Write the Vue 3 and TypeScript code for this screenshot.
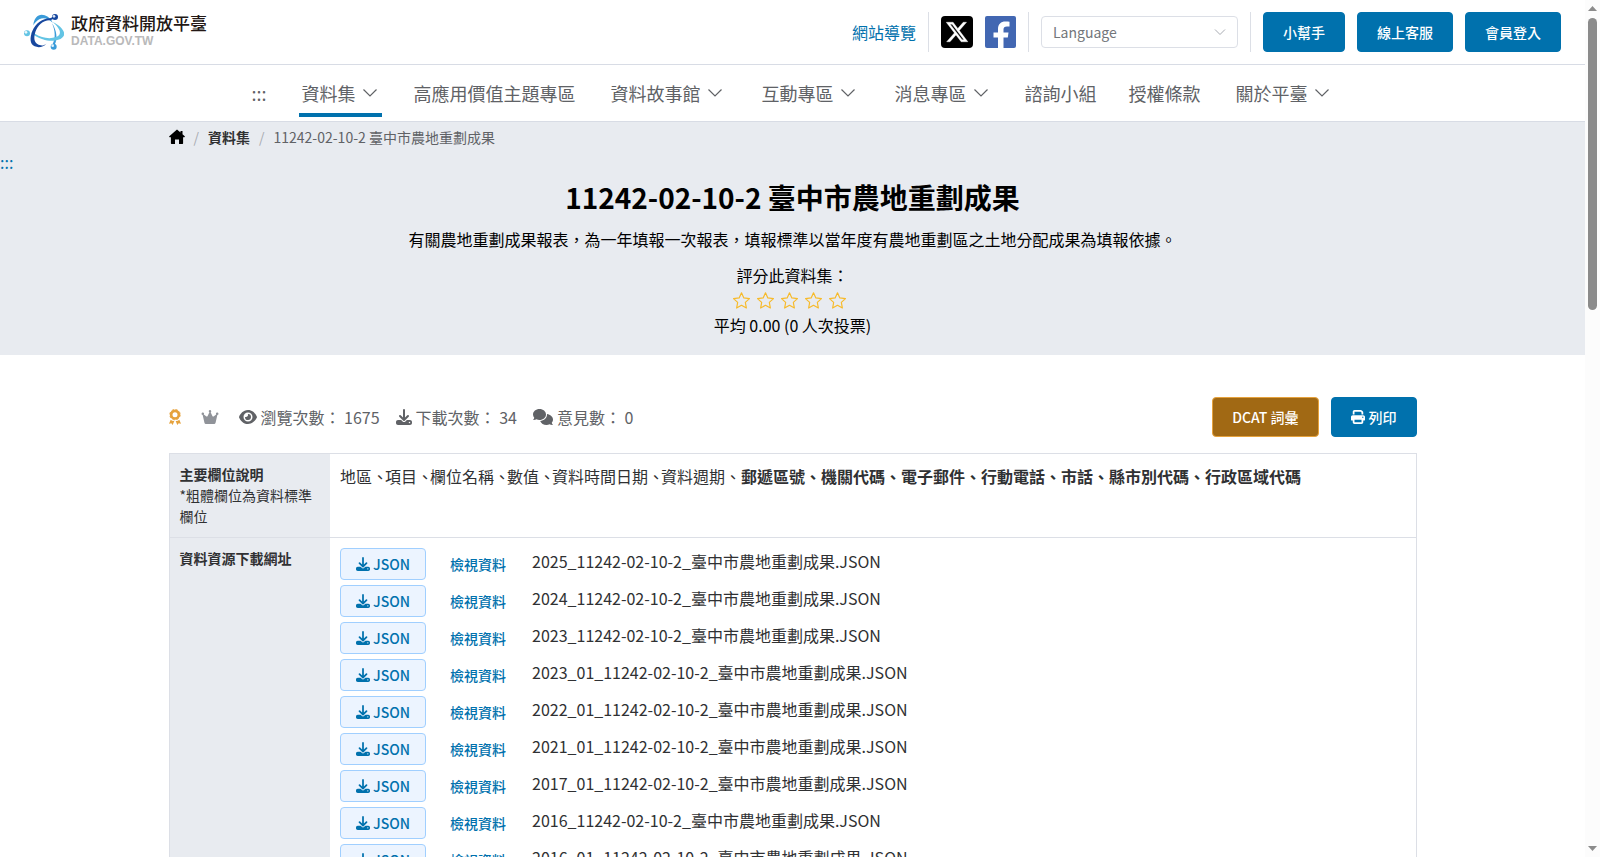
<script setup lang="ts">
import { ref } from 'vue'

interface NavItem {
  label: string
  menu: boolean
  active?: boolean
}

const navItems: NavItem[] = [
  { label: '資料集', menu: true, active: true },
  { label: '高應用價值主題專區', menu: false },
  { label: '資料故事館', menu: true },
  { label: '互動專區', menu: true },
  { label: '消息專區', menu: true },
  { label: '諮詢小組', menu: false },
  { label: '授權條款', menu: false },
  { label: '關於平臺', menu: true },
]

const title = '11242-02-10-2 臺中市農地重劃成果'
const fields = ['地區', '項目', '欄位名稱', '數值', '資料時間日期', '資料週期']
const standardFields = ['郵遞區號', '機關代碼', '電子郵件', '行動電話', '市話', '縣市別代碼', '行政區域代碼']
const editions = ['2025', '2024', '2023', '2023_01', '2022_01', '2021_01', '2017_01', '2016', '2016_01']
const files = editions.map((e) => `${e}_11242-02-10-2_臺中市農地重劃成果.JSON`)

const language = ref('')
const rating = ref(0)
</script>

<template>
  <div class="shell">
    <div class="page">
      <header class="top">
        <a class="brand" href="#">
          <svg class="brand-mark" viewBox="0 0 120 108" aria-hidden="true">
            <path d="M28 34C30 8 46-2 62 4C74 8 82 17 86 26C74 14 58 9 46 16C38 20 32 27 28 34Z" fill="#3a9bd9" />
            <path d="M84 28C98 48 102 76 92 92L86 90C95 74 94 50 84 28Z" fill="#3a9bd9" />
            <path d="M24 54L34 60C52 72 78 76 96 69C114 62 112 47 86 24C110 35 126 54 119 66C111 80 82 85 56 76C42 72 30 64 22 58Z" fill="#63c4e4" />
            <path d="M88 14L80 19C58 17 41 34 34 54C27 76 32 91 50 94C56 95 62 93 67 89C59 99 44 102 32 97C17 90 17 71 25 51C35 28 56 13 78 13L87 9Z" fill="#17479e" />
            <circle cx="93" cy="9" r="9" fill="#17479e" /><circle cx="90" cy="7" r="4" fill="#dfe9f6" />
            <circle cx="9" cy="58" r="9" fill="#63c4e4" /><circle cx="6" cy="55" r="4" fill="#eef9fc" />
            <circle cx="89" cy="98" r="9" fill="#3a9bd9" /><circle cx="86" cy="95" r="4" fill="#e4f2fb" />
          </svg>
          <span class="brand-text">
            <span class="brand-name">政府資料開放平臺</span>
            <span class="brand-domain">DATA.GOV.TW</span>
          </span>
        </a>
        <div class="tools">
          <a class="sitemap" href="#">網站導覽</a>
          <span class="rule"></span>
          <a class="social" href="#" aria-label="X">
            <svg viewBox="0 0 32 32" aria-hidden="true">
              <rect width="32" height="32" rx="4" fill="#000" />
              <path fill="#fff" stroke="#fff" stroke-width=".4" transform="translate(4 4)" d="M18.244 2.25h3.308l-7.227 8.260 8.502 11.240H16.170l-5.214-6.817L4.990 21.750H1.680l7.730-8.835L1.254 2.250H8.080l4.713 6.231zm-1.161 17.520h1.833L7.084 4.126H5.117z" />
            </svg>
          </a>
          <a class="social facebook" href="#" aria-label="Facebook">
            <svg viewBox="0 0 31 32" aria-hidden="true">
              <rect width="31" height="32" rx="2" fill="#4267b2" />
              <path fill="#fff" d="M13 32V21.500H8.500V16.500H13V13c0-5 3-7.500 7.300-7.500 1.700 0 3.200.1 4.200.2v4.700H22c-2.500 0-3.500 1.200-3.500 3v3.100h5l-.7 5h-4.300V32z" />
            </svg>
          </a>
          <span class="rule"></span>
          <span class="select-wrap">
            <select v-model="language" class="language" aria-label="Language">
              <option value="">Language</option>
              <option value="en">English</option>
              <option value="zh">中文</option>
            </select>
            <svg class="select-arrow" viewBox="0 0 14 14" aria-hidden="true"><path d="M2 4.500l5 5 5-5" fill="none" stroke="#a8abb2" /></svg>
          </span>
          <span class="rule"></span>
          <button class="btn" type="button">小幫手</button>
          <button class="btn" type="button">線上客服</button>
          <button class="btn" type="button">會員登入</button>
        </div>
      </header>

      <nav class="nav" aria-label="主選單">
        <a class="access" href="#">:::</a>
        <a v-for="item in navItems" :key="item.label" href="#" class="nav-item" :class="{ menu: item.menu, active: item.active }">
          {{ item.label }}
          <svg v-if="item.menu" viewBox="0 0 18 18" aria-hidden="true"><path d="M2.500 5.500L9 12l6.500-6.500" fill="none" stroke="currentColor" stroke-width="1.200" /></svg>
        </a>
      </nav>

      <section class="hero">
        <ol class="crumbs">
          <li>
            <a href="#" aria-label="首頁">
              <svg class="home" viewBox="0 0 16 16" aria-hidden="true"><path d="M8 .5L11.500 3.500V2h2v3.300L16 7.600l-1 1-.9-.6v6.300c0 .4-.2.700-.6.700H10V10.500H6V15H2.500c-.4 0-.6-.3-.6-.7V8L1 8.600l-1-1z" /></svg>
            </a>
          </li>
          <li><a class="crumb-link" href="#">資料集</a></li>
          <li>{{ title }}</li>
        </ol>
        <a class="anchor" href="#">:::</a>
        <h1>{{ title }}</h1>
        <p class="summary">有關農地重劃成果報表，為一年填報一次報表，填報標準以當年度有農地重劃區之土地分配成果為填報依據。</p>
        <p class="rate-label">評分此資料集：</p>
        <div class="stars">
          <button v-for="n in 5" :key="n" type="button" class="star" :aria-label="`${n} 星`" @click="rating = n">
            <svg viewBox="1 1 16 16" aria-hidden="true"><path d="M9 1.800l2.200 4.800 5.300.6-3.900 3.600 1 5.300L9 13.500l-4.600 2.600 1-5.300L1.500 7.200l5.300-.6z" :fill="n <= rating ? '#f7ba2a' : 'none'" stroke="#f7ba2a" stroke-width="1.100" stroke-linejoin="round" /></svg>
          </button>
        </div>
        <p class="average">平均 0.00 (0 人次投票)</p>
      </section>

      <main class="content">
        <div class="bar">
          <div class="stats">
            <svg class="award" viewBox="0 0 36 48" aria-hidden="true">
              <circle cx="18" cy="17" r="11.500" fill="none" stroke="#e6a23c" stroke-width="8" />
              <circle cx="18" cy="17" r="15.500" fill="none" stroke="#e6a23c" stroke-width="3" stroke-dasharray="7 5.170" />
              <path fill="#e6a23c" d="M5 32c3 2 6 4 11 4l-5 12-4-5-7 1zM31 32c-3 2-6 4-11 4l5 12 4-5 7 1z" />
            </svg>
            <svg class="crown" viewBox="0 0 576 512" aria-hidden="true"><path fill="#909399" d="M309 106c11-7 19-19 19-34a40 40 0 1 0-59 34l-57 115c-9 18-33 24-49 11l-73-58a40 40 0 1 0-38 18h1l55 238c5 30 32 50 62 50h236c30 0 57-20 62-50l55-238h1a40 40 0 1 0-38-18l-73 58c-16 13-40 7-49-11z" /></svg>
            <span class="stat">
              <svg class="eye" viewBox="0 0 576 512" aria-hidden="true"><path fill="currentColor" fill-rule="evenodd" d="M288 32C130 32 40 160 3 244c-3 8-3 16 0 24 37 84 127 212 285 212s248-128 285-212c3-8 3-16 0-24C536 160 446 32 288 32zM144 256a144 144 0 1 1 288 0 144 144 0 1 1-288 0zM288 192a64 64 0 0 1-84 61c-6-2-12 2-12 8a96 96 0 1 0 101-101c-6 0-10 6-8 12 2 6 3 13 3 20z" /></svg>
              瀏覽次數： 1675
            </span>
            <span class="stat">
              <svg class="down" viewBox="0 0 512 512" aria-hidden="true"><path fill="currentColor" fill-rule="evenodd" d="M288 32a32 32 0 0 0-64 0v243l-73-74a32 32 0 0 0-46 46l128 128a32 32 0 0 0 46 0l128-128a32 32 0 0 0-46-46l-73 74zM64 352c-35 0-64 29-64 64v32c0 35 29 64 64 64h384c35 0 64-29 64-64v-32c0-35-29-64-64-64H347l-46 45a64 64 0 0 1-90 0l-46-45zM432 408a24 24 0 1 1 0 48 24 24 0 0 1 0-48z" /></svg>
              下載次數： 34
            </span>
            <span class="stat">
              <svg class="chat" viewBox="0 0 640 512" aria-hidden="true"><path fill="currentColor" d="M208 352c115 0 208-79 208-176S323 0 208 0 0 79 0 176c0 38 15 74 40 103-4 22-16 38-28 51-8 8-4 22 8 22 36 0 66-12 90-25 28 16 62 25 98 25zM448 176c0 112-99 196-219 207 25 75 110 129 203 129 36 0 70-9 98-25 24 13 54 25 90 25 12 0 16-14 8-22-12-13-24-29-28-51 25-29 40-65 40-103 0-87-85-160-192-176z" /></svg>
              意見數： 0
            </span>
          </div>
          <div class="actions">
            <button class="btn dcat" type="button">DCAT 詞彙</button>
            <button class="btn" type="button">
              <svg class="print" viewBox="0 0 512 512" aria-hidden="true"><path fill="currentColor" fill-rule="evenodd" d="M128 0C93 0 64 29 64 64v96h64V64h227l29 29v67h64V93c0-17-7-33-19-45L400 19C388 7 372 0 355 0zM64 192c-35 0-64 29-64 64v112c0 9 7 16 16 16h48v64c0 35 29 64 64 64h256c35 0 64-29 64-64v-64h48c9 0 16-7 16-16V256c0-35-29-64-64-64zM128 352h256v96H128zM432 240a24 24 0 1 1 0 48 24 24 0 0 1 0-48z" /></svg>
              列印
            </button>
          </div>
        </div>

        <table class="info">
          <tbody>
            <tr>
              <th scope="row">主要欄位說明<br /><span class="note">*粗體欄位為資料標準欄位</span></th>
              <td><span v-for="f in fields" :key="f" class="field">{{ f }}、</span><b>{{ standardFields.join('、') }}</b></td>
            </tr>
            <tr>
              <th scope="row">資料資源下載網址</th>
              <td>
                <ul class="files">
                  <li v-for="f in files" :key="f">
                    <button class="json" type="button">
                      <svg class="json-icon" viewBox="0 0 512 512" aria-hidden="true"><path fill="currentColor" fill-rule="evenodd" d="M288 32a32 32 0 0 0-64 0v243l-73-74a32 32 0 0 0-46 46l128 128a32 32 0 0 0 46 0l128-128a32 32 0 0 0-46-46l-73 74zM64 352c-35 0-64 29-64 64v32c0 35 29 64 64 64h384c35 0 64-29 64-64v-32c0-35-29-64-64-64H347l-46 45a64 64 0 0 1-90 0l-46-45zM432 408a24 24 0 1 1 0 48 24 24 0 0 1 0-48z" /></svg>
                      JSON
                    </button>
                    <button class="view" type="button">檢視資料</button>
                    <span class="file-name">{{ f }}</span>
                  </li>
                </ul>
              </td>
            </tr>
          </tbody>
        </table>
      </main>
    </div>

    <div class="scrollbar" aria-hidden="true">
      <svg viewBox="0 0 15 17"><path d="M3 11h9L7.500 6z" fill="#8b8b8b" /></svg>
      <span class="track"><span class="thumb"></span></span>
      <svg viewBox="0 0 15 17"><path d="M3 6h9l-4.500 5z" fill="#8b8b8b" /></svg>
    </div>
  </div>
</template>

<style>
body {
  margin: 0;
  background: #fff;
}
</style>

<style scoped>
.shell {
  display: flex;
  height: 100vh;
  overflow: hidden;
  color: #303133;
  font: 16px/24px "Noto Sans CJK TC", "Noto Sans", sans-serif;
}
.page {
  flex: 1;
  min-width: 0;
  overflow: hidden;
}
a {
  color: #0071ad;
  text-decoration: none;
}
button {
  font-family: inherit;
  cursor: pointer;
}
svg {
  flex: none;
}
h1, p, ol, ul {
  margin: 0;
  padding: 0;
  list-style: none;
}
.top {
  display: flex;
  align-items: center;
  justify-content: space-between;
  height: 64px;
  padding: 0 24px;
  border-bottom: 1px solid #d8dce5;
}
.brand {
  display: flex;
  align-items: center;
  gap: 7px;
}
.brand-mark {
  width: 40px;
  height: 36px;
}
.brand-text {
  display: flex;
  flex-direction: column;
}
.brand-name {
  color: #231815;
  font-size: 17px;
  font-weight: 500;
  line-height: 18px;
}
.brand-domain {
  color: #b9b9ba;
  font: bold 12px/18px "Liberation Sans", Arial, sans-serif;
}
.tools {
  display: flex;
  align-items: center;
  gap: 12px;
}
.rule {
  width: 1px;
  height: 40px;
  background: #dcdfe6;
}
.social,
.social svg {
  display: block;
  width: 32px;
  height: 32px;
}
.facebook,
.facebook svg {
  width: 31px;
}
.select-wrap {
  position: relative;
  width: 197px;
}
.language {
  display: block;
  width: 100%;
  height: 32px;
  padding: 0 30px 0 11px;
  border: 1px solid #dcdfe6;
  border-radius: 4px;
  background: #fff;
  color: #73767a;
  font: 14px/20px "Noto Sans CJK TC", sans-serif;
  appearance: none;
}
.select-arrow {
  position: absolute;
  top: 9px;
  right: 11px;
  width: 14px;
  height: 14px;
  pointer-events: none;
}
.btn {
  display: flex;
  align-items: center;
  gap: 4px;
  height: 40px;
  padding: 0 19px;
  border: 1px solid #0071ad;
  border-radius: 4px;
  background: #0071ad;
  color: #fff;
  font-size: 14px;
  font-weight: 500;
  line-height: 20px;
}
.dcat {
  border-color: #e6a23c;
  background: #a16914;
}
.nav {
  display: flex;
  justify-content: center;
  gap: 32px;
  height: 56px;
  border-bottom: 1px solid #d8dce5;
  font-size: 18px;
  line-height: 56px;
}
.access,
.nav-item {
  color: #606266;
}
.nav-item {
  display: flex;
  align-items: center;
  gap: 5px;
}
.nav-item svg {
  width: 18px;
  height: 18px;
}
.menu {
  padding: 0 3px;
}
.active {
  height: 40px;
  padding-top: 8px;
  border-bottom: 4px solid #0071ad;
}
.hero {
  padding-bottom: 18px;
  background: #e8ebf0;
  color: #000;
  text-align: center;
}
.crumbs,
.content {
  box-sizing: border-box;
  max-width: 1280px;
  margin: 0 auto;
  padding: 0 16px;
}
.crumbs {
  display: flex;
  align-items: center;
  height: 30px;
  color: #606266;
  font-size: 14px;
}
.crumbs li {
  display: flex;
  align-items: center;
}
.crumbs li + li::before {
  content: "/";
  margin: 0 9px;
  color: #a8abb2;
}
.home {
  display: block;
  width: 16px;
  height: 16px;
}
.crumb-link {
  color: #303133;
  font-weight: 700;
}
.anchor {
  display: block;
  height: 24px;
  line-height: 20px;
  text-align: left;
}
h1 {
  font-size: 28px;
  font-weight: 700;
  line-height: 42px;
}
.summary {
  margin-top: 9px;
}
.rate-label {
  margin-top: 12px;
}
.stars {
  display: flex;
  justify-content: center;
  height: 26px;
}
.star {
  display: flex;
  align-items: center;
  width: 24px;
  padding: 0;
  border: 0;
  background: none;
}
.star svg {
  width: 17px;
  height: 17px;
}
.bar {
  display: flex;
  align-items: center;
  justify-content: space-between;
  margin: 42px 0 16px;
}
.stats,
.actions {
  display: flex;
  align-items: center;
}
.stats {
  color: #606266;
}
.actions {
  gap: 12px;
}
.award {
  width: 12px;
  height: 16px;
  margin-right: 20px;
}
.crown {
  width: 18px;
  height: 16px;
  margin-right: 20px;
}
.stat {
  display: flex;
  align-items: center;
  gap: 4px;
  margin-right: 16px;
}
.eye {
  width: 18px;
  height: 16px;
}
.down {
  width: 16px;
  height: 16px;
}
.chat {
  width: 20px;
  height: 16px;
}
.print,
.json-icon {
  width: 14px;
  height: 14px;
}
.info {
  width: 100%;
  border: 1px solid #dcdfe6;
  border-collapse: collapse;
}
.info tr {
  border-bottom: 1px solid #dcdfe6;
}
.info th {
  box-sizing: border-box;
  width: 161px;
  padding: 10px;
  background: #e8ebf0;
  font-size: 14px;
  font-weight: 700;
  line-height: 21px;
  text-align: left;
  vertical-align: top;
}
.note {
  font-weight: 400;
}
.info td {
  padding: 10px;
  vertical-align: top;
}
.field:not(:last-of-type) {
  margin-right: -3px;
}
.files li {
  display: flex;
  margin-bottom: 5px;
}
.json,
.view {
  display: flex;
  align-items: center;
  gap: 3px;
  height: 32px;
  padding: 0 15px;
  border: 1px solid #a0cfff;
  border-radius: 4px;
  background: #ecf4ff;
  color: #0071ad;
  font-size: 14px;
  font-weight: 500;
  line-height: 20px;
}
.view {
  margin-left: 8px;
  border-color: transparent;
  background: none;
}
.file-name {
  margin-left: 10px;
  line-height: 26px;
}
.scrollbar {
  display: flex;
  flex-direction: column;
  width: 15px;
  background: #fcfcfc;
}
.scrollbar svg {
  width: 15px;
  height: 17px;
}
.track {
  flex: 1;
  padding: 1px 3px;
}
.thumb {
  display: block;
  height: 292px;
  border-radius: 5px;
  background: #8b8b8b;
}
</style>
